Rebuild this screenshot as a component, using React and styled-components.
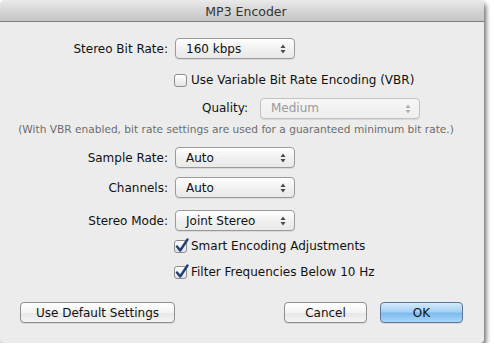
import React from "react";
import styled, { createGlobalStyle } from "styled-components";

const GlobalStyle = createGlobalStyle`
  html, body {
    margin: 0;
    padding: 0;
    background: #ffffff;
  }
  body {
    font-family: "DejaVu Sans", "Liberation Sans", sans-serif;
    font-size: 12px;
    color: #111;
  }
`;

const Window = styled.div`
  width: 484px;
  height: 343px;
  background: #ececec;
  border-radius: 5px 5px 4px 4px;
  box-shadow: 2px 3px 5px rgba(0, 0, 0, 0.6);
  display: flex;
  flex-direction: column;
  overflow: hidden;
`;

const TitleBar = styled.div`
  height: 21px;
  flex: none;
  background: linear-gradient(#eaeaea, #d2d2d2 60%, #c6c6c6);
  border-bottom: 1px solid #7c7c7c;
  display: flex;
  align-items: center;
  justify-content: center;
  font-size: 12.5px;
  color: #333;
  padding-left: 8px;
  padding-top: 1px;
  box-sizing: border-box;
  height: 22px;
`;

const Body = styled.div`
  flex: 1;
  display: flex;
  flex-direction: column;
`;

const Row = styled.div`
  display: flex;
  align-items: center;
  height: ${(p) => p.h || 21}px;
  margin-top: ${(p) => p.mt || 0}px;
`;

const Label = styled.span`
  width: ${(p) => p.w || 168}px;
  text-align: right;
  flex: none;
  margin-right: ${(p) => p.gap || 7}px;
  white-space: nowrap;
`;

const Popup = styled.div`
  position: relative;
  width: ${(p) => p.w || 120}px;
  height: 21px;
  box-sizing: border-box;
  border: 1px solid ${(p) => (p.disabled ? "#c2c2c2" : "#9a9a9a")};
  border-radius: 4px;
  background: ${(p) =>
    p.disabled
      ? "linear-gradient(#f6f6f6, #eeeeee)"
      : "linear-gradient(#ffffff, #f1f1f1 50%, #e9e9e9)"};
  box-shadow: 0 1px 0 rgba(0, 0, 0, 0.08);
  display: flex;
  align-items: center;
  padding-left: 10px;
  color: ${(p) => (p.disabled ? "#9a9a9a" : "#111")};
  font-size: 12px;
`;

const Arrows = styled.svg`
  position: absolute;
  right: 8px;
  top: 5px;
`;

const CheckRow = styled.label`
  display: flex;
  align-items: center;
  height: 18px;
  margin-top: ${(p) => p.mt || 0}px;
  padding-left: 174px;
`;

const Box = styled.span`
  position: relative;
  width: 13px;
  height: 13px;
  box-sizing: border-box;
  border: 1px solid #8d8d8d;
  border-radius: 3px;
  background: linear-gradient(#ffffff, #e4e4e4);
  margin-right: 4px;
  flex: none;
`;

const Tick = styled.svg`
  position: absolute;
  left: 0px;
  top: -3px;
`;

const Note = styled.div`
  margin-top: 5px;
  height: 14px;
  text-align: center;
  font-size: 10.6px;
  color: #6d6d6d;
  white-space: nowrap;
  padding-right: 12px;
`;

const ButtonBar = styled.div`
  display: flex;
  align-items: center;
  margin-top: 21px;
  padding: 0 21px 0 20px;
`;

const Button = styled.button`
  height: 21px;
  width: ${(p) => p.w}px;
  box-sizing: border-box;
  font-family: "DejaVu Sans", "Liberation Sans", sans-serif;
  font-size: 12px;
  color: #111;
  border: 1px solid ${(p) => (p.primary ? "#5d7597" : "#8e8e8e")};
  border-radius: 4px;
  padding: 0;
  margin-left: ${(p) => p.ml || 0}px;
  background: ${(p) =>
    p.primary
      ? "linear-gradient(#d4ebfb, #a6d1f4 45%, #7dbcef 55%, #a9d7fb)"
      : "linear-gradient(#ffffff, #f3f3f3 50%, #e8e8e8 55%, #f4f4f4)"};
  box-shadow: 0 1px 0 rgba(0, 0, 0, 0.08);
`;

const Spacer = styled.div`
  flex: 1;
`;

function PopupArrows({ disabled }) {
  const c = disabled ? "#b0b0b0" : "#4a4a4a";
  return (
    <Arrows width="6" height="10" viewBox="0 0 6 10">
      <path d="M3 0.5 L5.5 4 L0.5 4 Z" fill={c} />
      <path d="M3 9.5 L5.5 6 L0.5 6 Z" fill={c} />
    </Arrows>
  );
}

function Select({ value, w, disabled }) {
  return (
    <Popup w={w} disabled={disabled}>
      {value}
      <PopupArrows disabled={disabled} />
    </Popup>
  );
}

function Checkbox({ checked, label, mt }) {
  return (
    <CheckRow mt={mt}>
      <Box>
        {checked && (
          <Tick width="15" height="16" viewBox="0 0 15 16">
            <path
              d="M2 8.5 L5.2 12.5 L12.5 1.5"
              fill="none"
              stroke="#223f78"
              strokeWidth="2.4"
              strokeLinecap="round"
              strokeLinejoin="round"
            />
          </Tick>
        )}
      </Box>
      {label}
    </CheckRow>
  );
}

export default function App() {
  return (
    <>
      <GlobalStyle />
      <Window>
        <TitleBar>MP3 Encoder</TitleBar>
        <Body>
          <Row mt={16}>
            <Label>Stereo Bit Rate:</Label>
            <Select value="160 kbps" />
          </Row>
          <Checkbox mt={12} label="Use Variable Bit Rate Encoding (VBR)" />
          <Row mt={9} h={20}>
            <Label w={248} gap={12}>
              Quality:
            </Label>
            <Select value="Medium" w={160} disabled />
          </Row>
          <Note>
            (With VBR enabled, bit rate settings are used for a guaranteed
            minimum bit rate.)
          </Note>
          <Row mt={10}>
            <Label>Sample Rate:</Label>
            <Select value="Auto" />
          </Row>
          <Row mt={9}>
            <Label>Channels:</Label>
            <Select value="Auto" />
          </Row>
          <Row mt={12}>
            <Label>Stereo Mode:</Label>
            <Select value="Joint Stereo" />
          </Row>
          <Checkbox checked mt={6} label="Smart Encoding Adjustments" />
          <Checkbox checked mt={8} label="Filter Frequencies Below 10 Hz" />
          <ButtonBar>
            <Button w={155}>Use Default Settings</Button>
            <Spacer />
            <Button w={83}>Cancel</Button>
            <Button w={83} ml={13} primary>
              OK
            </Button>
          </ButtonBar>
        </Body>
      </Window>
    </>
  );
}
